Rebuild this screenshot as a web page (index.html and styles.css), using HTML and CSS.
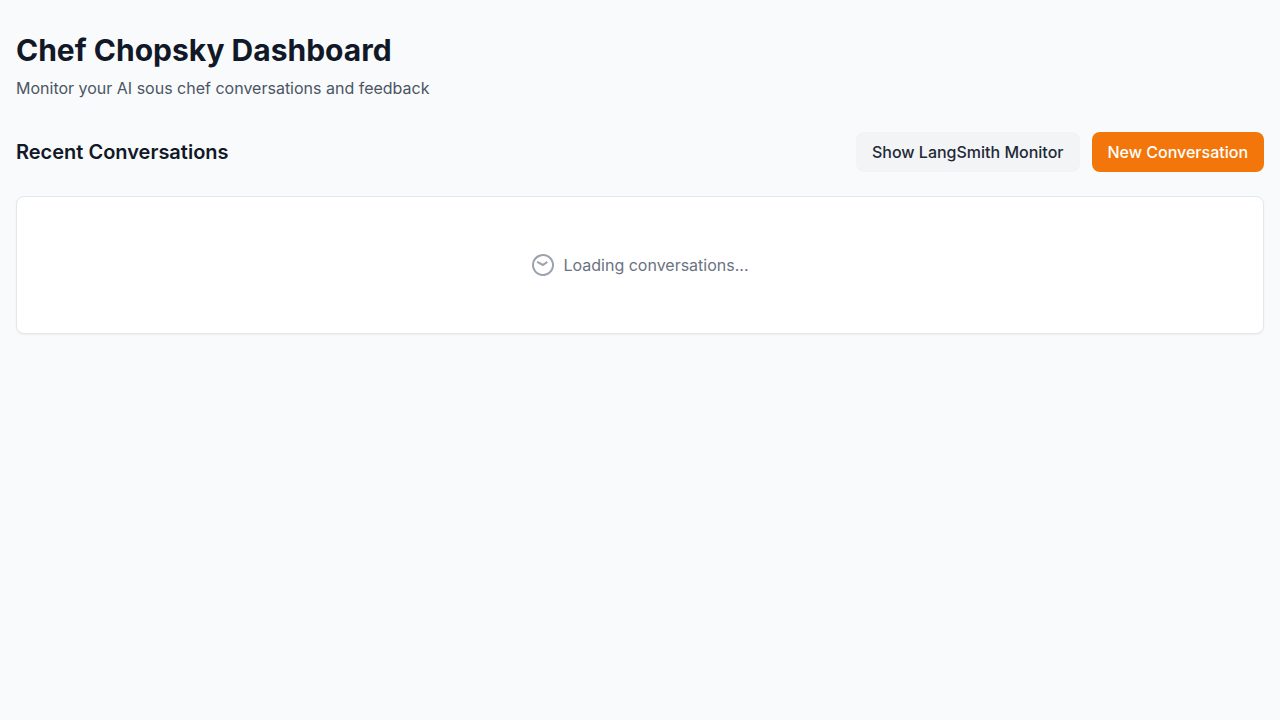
FILE: index.html
```html
<!DOCTYPE html>
<html lang="en">
<head>
<meta charset="utf-8">
<meta name="viewport" content="width=device-width, initial-scale=1">
<title>Chef Chopsky Dashboard</title>
<link rel="stylesheet" href="styles.css">
</head>
<body>
<main class="page">
  <header class="intro">
    <h1 class="title">Chef Chopsky Dashboard</h1>
    <p class="subtitle">Monitor your AI sous chef conversations and feedback</p>
  </header>
  <section>
    <div class="toolbar">
      <h2 class="heading">Recent Conversations</h2>
      <div class="actions">
        <button type="button" class="btn btn-secondary">Show LangSmith Monitor</button>
        <button type="button" class="btn btn-primary">New Conversation</button>
      </div>
    </div>
    <div class="card" role="status">
      <svg class="clock" viewBox="0 0 24 24" aria-hidden="true"><g transform="rotate(-62 12 12)"><circle cx="12" cy="12" r="10"/><path d="M12 6v6l4 2"/></g></svg>
      <span>Loading conversations...</span>
    </div>
  </section>
</main>
</body>
</html>
```

FILE: styles.css
```css
*, *::before, *::after { box-sizing: border-box; }
body {
  margin: 0;
  background: #f9fafb;
  color: #111827;
  font-family: Inter, "Liberation Sans", sans-serif;
  font-size: 16px;
  line-height: 24px;
}
h1, h2, p { margin: 0; }
.page { max-width: 1280px; margin: 0 auto; padding: 32px 16px; }
.intro { margin-bottom: 32px; }
.title { margin-bottom: 8px; font-size: 30px; line-height: 36px; font-weight: 700; }
.subtitle { color: #4b5563; }
.toolbar { display: flex; flex-wrap: wrap; justify-content: space-between; align-items: center; gap: 12px; margin-bottom: 24px; }
.heading { font-size: 20px; line-height: 28px; font-weight: 600; }
.actions { display: flex; flex-wrap: wrap; gap: 12px; }
.btn { padding: 8px 16px; border: 0; border-radius: 8px; font: inherit; font-weight: 500; cursor: pointer; }
.btn-secondary { background: #f3f4f6; color: #1f2937; }
.btn-primary { background: #f2760a; color: #fff; }
.card {
  display: flex; justify-content: center; align-items: center; gap: 8px;
  padding: 56px 24px;
  background: #fff; color: #6b7280;
  border: 1px solid #e5e7eb; border-radius: 8px;
  box-shadow: 0 1px 2px rgba(0, 0, 0, .05);
}
.clock { width: 24px; height: 24px; fill: none; stroke: #9ca3af; stroke-width: 2; stroke-linecap: round; stroke-linejoin: round; }
```
